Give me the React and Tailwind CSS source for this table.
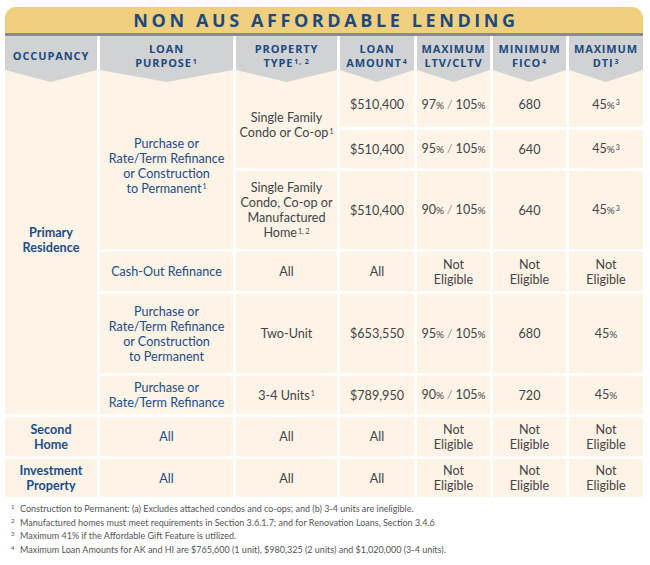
import React from 'react'

const cols = 'grid grid-cols-[92px_133px_101px_74px_73px_73px_74px] gap-x-[3px]'

function Pct({ v }) {
    return (
        <span>
            {v}
            <span className="text-[10px]">%</span>
        </span>
    )
}

function Ltv({ a }) {
    return (
        <span>
            <Pct v={a} />
            <span className="font-light mx-[3px]">/</span>
            <Pct v="105" />
        </span>
    )
}

function Head({ children }) {
    return (
        <div className="h-[46px] bg-[#fdf3e7]">
            <div className="h-full bg-[#d1d2d4] [clip-path:polygon(0_0,100%_0,100%_34px,50%_46px,0_34px)] flex items-center justify-center pb-[6px] text-center text-[11px] leading-[14px] font-bold tracking-[0.08em] text-[#1c4a80] font-['Open_Sans',sans-serif]">
                <div>{children}</div>
            </div>
        </div>
    )
}

function Cell({ className = '', children }) {
    return (
        <div
            className={`bg-[#fdf3e7] flex items-center justify-center text-center whitespace-nowrap ${className}`}
        >
            <div>{children}</div>
        </div>
    )
}

const Sup = ({ children }) => <sup className="text-[7px] ml-[1px]">{children}</sup>

const NE = () => (
    <span>
        Not
        <br />
        Eligible
    </span>
)

function App() {
    const blue = 'text-[#1c4d86]'
    return (
        <div className="w-[650px] h-[565px] bg-white pt-[7px] pl-[5px] font-['Lato',sans-serif] text-[12.6px] leading-[15px] text-[#444446]">
            <div className="w-[638px]">
                <div className="h-[26px] bg-[#f0d07f] rounded-t-[11px] flex items-center justify-center pt-[1px]">
                    <span className="font-['Open_Sans',sans-serif] font-bold text-[18px] tracking-[0.2em] text-[#1c4a80] pl-[4px]">
                        NON AUS AFFORDABLE LENDING
                    </span>
                </div>
                <div className="h-[3px] bg-[#8b8b8b]"></div>
                <div className={cols}>
                    <Head>OCCUPANCY</Head>
                    <Head>
                        LOAN
                        <br />
                        PURPOSE<Sup>1</Sup>
                    </Head>
                    <Head>
                        PROPERTY
                        <br />
                        TYPE<Sup>1, 2</Sup>
                    </Head>
                    <Head>
                        LOAN
                        <br />
                        AMOUNT<Sup>4</Sup>
                    </Head>
                    <Head>
                        MAXIMUM
                        <br />
                        LTV/CLTV
                    </Head>
                    <Head>
                        MINIMUM
                        <br />
                        FICO<Sup>4</Sup>
                    </Head>
                    <Head>
                        MAXIMUM
                        <br />
                        DTI<Sup>3</Sup>
                    </Head>
                </div>
                <div
                    className={`${cols} gap-y-[3px] grid-rows-[45px_38px_78px_39px_79px_38px_39px_38px]`}
                >
                    <Cell className={`row-span-6 pb-[16px] font-bold ${blue}`}>
                        Primary
                        <br />
                        Residence
                    </Cell>
                    <Cell className={`row-span-3 ${blue}`}>
                        Purchase or
                        <br />
                        Rate/Term Refinance
                        <br />
                        or Construction
                        <br />
                        to Permanent<Sup>1</Sup>
                    </Cell>
                    <Cell className="row-span-2">
                        Single Family
                        <br />
                        Condo or Co-op<Sup>1</Sup>
                    </Cell>
                    <Cell>$510,400</Cell>
                    <Cell>
                        <Ltv a="97" />
                    </Cell>
                    <Cell>680</Cell>
                    <Cell>
                        <Pct v="45" />
                        <Sup>3</Sup>
                    </Cell>

                    <Cell>$510,400</Cell>
                    <Cell>
                        <Ltv a="95" />
                    </Cell>
                    <Cell>640</Cell>
                    <Cell>
                        <Pct v="45" />
                        <Sup>3</Sup>
                    </Cell>

                    <Cell>
                        Single Family
                        <br />
                        Condo, Co-op or
                        <br />
                        Manufactured
                        <br />
                        Home<Sup>1, 2</Sup>
                    </Cell>
                    <Cell>$510,400</Cell>
                    <Cell>
                        <Ltv a="90" />
                    </Cell>
                    <Cell>640</Cell>
                    <Cell>
                        <Pct v="45" />
                        <Sup>3</Sup>
                    </Cell>

                    <Cell className={blue}>Cash-Out Refinance</Cell>
                    <Cell>All</Cell>
                    <Cell>All</Cell>
                    <Cell>
                        <NE />
                    </Cell>
                    <Cell>
                        <NE />
                    </Cell>
                    <Cell>
                        <NE />
                    </Cell>

                    <Cell className={blue}>
                        Purchase or
                        <br />
                        Rate/Term Refinance
                        <br />
                        or Construction
                        <br />
                        to Permanent
                    </Cell>
                    <Cell>Two-Unit</Cell>
                    <Cell>$653,550</Cell>
                    <Cell>
                        <Ltv a="95" />
                    </Cell>
                    <Cell>680</Cell>
                    <Cell>
                        <Pct v="45" />
                    </Cell>

                    <Cell className={blue}>
                        Purchase or
                        <br />
                        Rate/Term Refinance
                    </Cell>
                    <Cell>
                        3-4 Units<Sup>1</Sup>
                    </Cell>
                    <Cell>$789,950</Cell>
                    <Cell>
                        <Ltv a="90" />
                    </Cell>
                    <Cell>720</Cell>
                    <Cell>
                        <Pct v="45" />
                    </Cell>

                    <Cell className={`font-bold ${blue}`}>
                        Second
                        <br />
                        Home
                    </Cell>
                    <Cell className={blue}>All</Cell>
                    <Cell>All</Cell>
                    <Cell>All</Cell>
                    <Cell>
                        <NE />
                    </Cell>
                    <Cell>
                        <NE />
                    </Cell>
                    <Cell>
                        <NE />
                    </Cell>

                    <Cell className={`font-bold ${blue}`}>
                        Investment
                        <br />
                        Property
                    </Cell>
                    <Cell className={blue}>All</Cell>
                    <Cell>All</Cell>
                    <Cell>All</Cell>
                    <Cell>
                        <NE />
                    </Cell>
                    <Cell>
                        <NE />
                    </Cell>
                    <Cell>
                        <NE />
                    </Cell>
                </div>
                <div className="mt-[5px] text-[9px] leading-[13.6px] text-[#555557]">
                    {[
                        'Construction to Permanent: (a) Excludes attached condos and co-ops; and (b) 3-4 units are ineligible.',
                        'Manufactured homes must meet requirements in Section 3.6.1.7; and for Renovation Loans, Section 3.4.6',
                        'Maximum 41% if the Affordable Gift Feature is utilized.',
                        'Maximum Loan Amounts for AK and HI are $765,600 (1 unit), $980,325 (2 units) and $1,020,000 (3-4 units).',
                    ].map((t, i) => (
                        <div key={i} className="flex">
                            <span className="w-[15px] pl-[6px] text-[6px] leading-[10px]">{i + 1}</span>
                            <span>{t}</span>
                        </div>
                    ))}
                </div>
            </div>
        </div>
    )
}

export default App
